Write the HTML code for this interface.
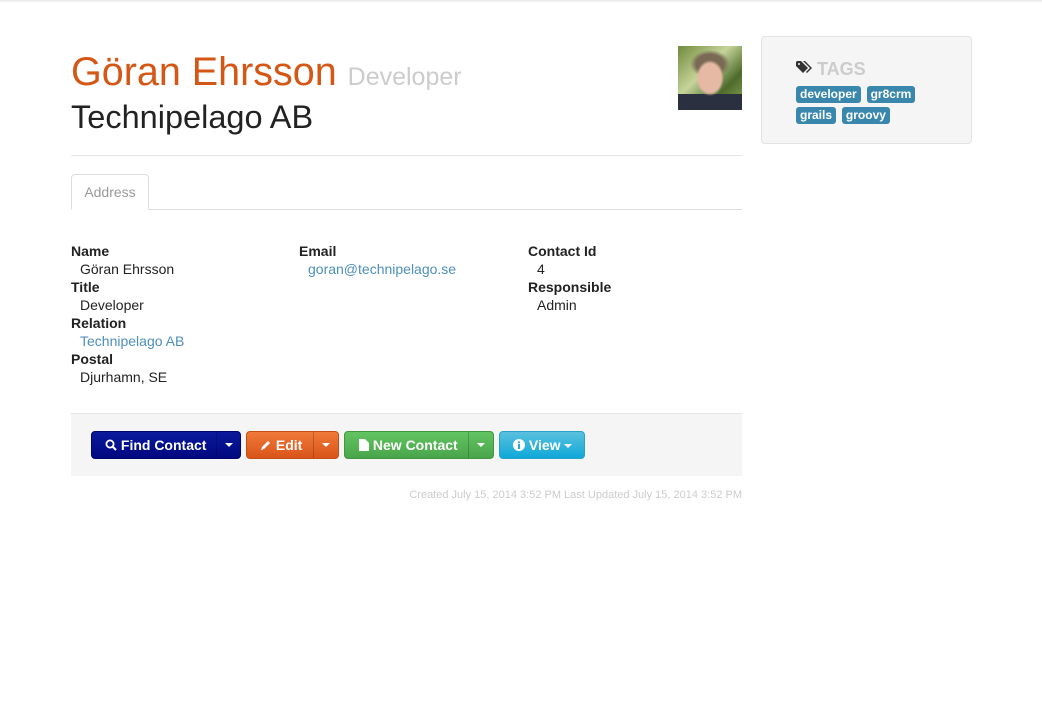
<!DOCTYPE html>
<html><head><meta charset="utf-8"><style>
*{box-sizing:border-box}
body{margin:0;width:1042px;height:720px;background:#fff;font-family:"Liberation Sans",Arial,sans-serif;font-size:14px;color:#333;position:relative;overflow:hidden}
.top{position:absolute;left:0;top:0;width:1042px;height:3px;background:linear-gradient(#e8e8e8,#fff)}
.abs{position:absolute;white-space:nowrap}
h1{margin:0;font-size:39.5px;font-weight:normal;color:#d45716;line-height:1}
h1 small{font-size:25px;color:#ccc}
.co{font-size:32.5px;color:#222;line-height:1}
.lbl{font-weight:bold;color:#222;line-height:18px}
.val{padding-left:9px;line-height:18px;color:#222}
a{color:#4d8fbf;text-decoration:none}
.btn{position:absolute;top:431px;height:28px;border-radius:4px;color:#fff;font-weight:bold;font-size:14px;line-height:26px;display:flex;overflow:hidden}
.btn span{display:block;height:26px}
.btn .car{border-left:1px solid rgba(0,0,0,.2);display:flex;align-items:center;justify-content:center}
.car:after{content:"";border-left:4px solid transparent;border-right:4px solid transparent;border-top:4px solid #fff}
.tag{display:inline-block;background:#3a87ad;color:#fff;font-weight:bold;font-size:12px;line-height:17px;padding:0 4px;border-radius:3px;margin-right:2px}
</style></head><body>
<div class="top"></div>
<div class="abs" style="left:71px;top:53px"><h1>Göran Ehrsson <small>Developer</small></h1></div>
<div class="abs co" style="left:71px;top:101px">Technipelago AB</div>
<div class="abs" style="left:678px;top:46px;width:64px;height:64px;background:radial-gradient(ellipse 14px 18px at 32px 32px,#e5b9a3 80%,transparent 100%),radial-gradient(ellipse 20px 14px at 32px 18px,#7a6a55 70%,transparent 100%),linear-gradient(180deg,transparent 75%,#2a3040 75%),linear-gradient(135deg,#6f8a3c,#c6d49a 40%,#4d6b2a 70%,#8ea85a)"></div>
<div class="abs" style="left:71px;top:155px;width:671px;height:1px;background:#e5e5e5"></div>
<div class="abs" style="left:71px;top:209px;width:671px;height:1px;background:#ddd"></div>
<div class="abs" style="left:71px;top:174px;width:78px;height:36px;border:1px solid #ddd;border-bottom-color:#fff;border-radius:4px 4px 0 0;background:#fff;color:#999;text-align:center;line-height:34px">Address</div>
<div class="abs" style="left:71px;top:242px">
<div class="lbl">Name</div><div class="val">Göran Ehrsson</div>
<div class="lbl">Title</div><div class="val">Developer</div>
<div class="lbl">Relation</div><div class="val"><a>Technipelago AB</a></div>
<div class="lbl">Postal</div><div class="val">Djurhamn, SE</div>
</div>
<div class="abs" style="left:299px;top:242px"><div class="lbl">Email</div><div class="val"><a>goran@technipelago.se</a></div></div>
<div class="abs" style="left:528px;top:242px"><div class="lbl">Contact Id</div><div class="val">4</div><div class="lbl">Responsible</div><div class="val">Admin</div></div>
<div class="abs" style="left:71px;top:413px;width:671px;height:63px;background:#f5f5f5;border-top:1px solid #e5e5e5"></div>
<div class="btn" style="left:91px;width:150px;background:linear-gradient(#0a1a9c,#00087f);border:1px solid #00066a"><span style="width:124px;padding-left:13px"><svg width="12" height="12" viewBox="0 0 12 12" style="vertical-align:-1px"><circle cx="5" cy="5" r="3.6" fill="none" stroke="#fff" stroke-width="1.8"/><path d="M7.5 7.5L11 11" stroke="#fff" stroke-width="2"/></svg> Find Contact</span><span class="car" style="width:24px"></span></div>
<div class="btn" style="left:246px;width:93px;background:linear-gradient(#f07a3a,#d9541a);border:1px solid #c44e16"><span style="width:66px;padding-left:13px"><svg width="12" height="12" viewBox="0 0 12 12" style="vertical-align:-1px"><path d="M1 11l1-3 6-6 2 2-6 6z" fill="#fff"/></svg> Edit</span><span class="car" style="width:25px"></span></div>
<div class="btn" style="left:344px;width:150px;background:linear-gradient(#62c462,#4aa54a);border:1px solid #419641"><span style="width:123px;padding-left:14px"><svg width="10" height="12" viewBox="0 0 10 12" style="vertical-align:-1px"><path d="M0 0h6l4 4v8H0z" fill="#fff"/></svg> New Contact</span><span class="car" style="width:25px"></span></div>
<div class="btn" style="left:499px;width:86px;background:linear-gradient(#5bc0de,#0fa8d8);border:1px solid #2aa3cc"><span style="padding-left:13px"><svg width="12" height="12" viewBox="0 0 12 12" style="vertical-align:-1px"><circle cx="6" cy="6" r="6" fill="#fff"/><rect x="5" y="5" width="2" height="5" fill="#2aa9d6"/><circle cx="6" cy="3.3" r="1.1" fill="#2aa9d6"/></svg> View <span style="display:inline-block;height:auto;border-left:4px solid transparent;border-right:4px solid transparent;border-top:4px solid #fff;vertical-align:2px"></span></span></div>
<div class="abs" style="right:300px;top:489px;font-size:11px;color:#ccc">Created July 15, 2014 3:52 PM Last Updated July 15, 2014 3:52 PM</div>
<div class="abs" style="left:761px;top:36px;width:211px;height:108px;background:#f5f5f5;border:1px solid #e3e3e3;border-radius:4px"></div>
<div class="abs" style="left:796px;top:58px;font-size:18px;font-weight:bold;color:#ccc;line-height:22px"><svg width="16" height="14" viewBox="0 0 16 14" style="vertical-align:0"><path d="M0 1v4l7 7 5-5-7-7H1z" fill="#333"/><circle cx="3" cy="3" r="1" fill="#f5f5f5"/><path d="M7 0h2l7 7-5 5-1-1 4-4z" fill="#333"/></svg> TAGS</div>
<div class="abs" style="left:796px;top:85px"><span class="tag">developer</span> <span class="tag">gr8crm</span></div>
<div class="abs" style="left:796px;top:106px"><span class="tag">grails</span> <span class="tag">groovy</span></div>
</body></html>
